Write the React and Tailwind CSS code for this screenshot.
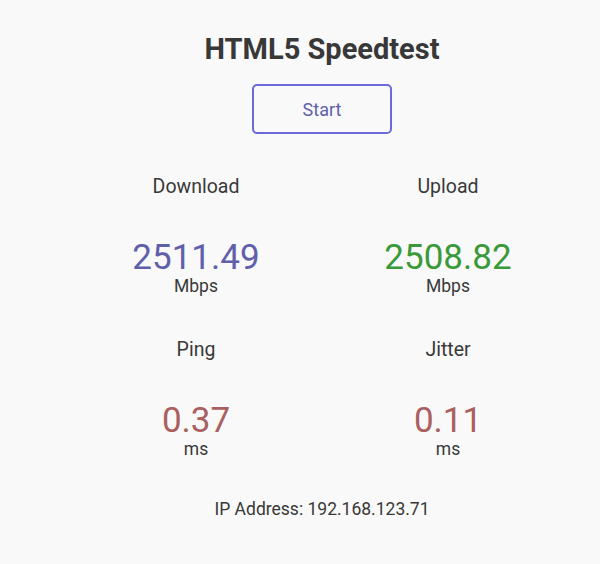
const stats = [
  { label: "Download", value: "2511.49", unit: "Mbps", color: "text-[#6060aa]" },
  { label: "Upload", value: "2508.82", unit: "Mbps", color: "text-[#3a9a3a]" },
  { label: "Ping", value: "0.37", unit: "ms", color: "text-[#aa6060]" },
  { label: "Jitter", value: "0.11", unit: "ms", color: "text-[#aa6060]" },
];

const Stat = ({ label, value, unit, color }) => (
  <div className="flex flex-col items-center">
    <div className="text-[19.5px] leading-[24px] text-[#383838]">{label}</div>
    <div className={`mt-[41px] text-[35px] leading-[36px] ${color}`}>{value}</div>
    <div className="text-[17.5px] leading-[20px] text-[#383838]">{unit}</div>
  </div>
);

export default function App() {
  return (
    <div className="min-h-[564px] w-full bg-[#f9f9f9] font-['Roboto',sans-serif] pl-[44px]">
      <div className="mx-auto w-[504px] flex flex-col items-center pt-[33px]">
        <h1 className="text-[29px] leading-[32px] font-bold text-[#383838]">HTML5 Speedtest</h1>
        <button className="mt-[19px] w-[140px] h-[50px] rounded-[5px] border-2 border-[#6a6ad8] text-[18px] text-[#6060aa]">
          Start
        </button>
        <div className="mt-[41px] grid grid-cols-2 w-full gap-y-[42px]">
          {stats.map((s) => (
            <Stat key={s.label} {...s} />
          ))}
        </div>
        <div className="mt-[40px] text-[17.5px] leading-[20px] text-[#383838]">IP Address: 192.168.123.71</div>
      </div>
    </div>
  );
}
